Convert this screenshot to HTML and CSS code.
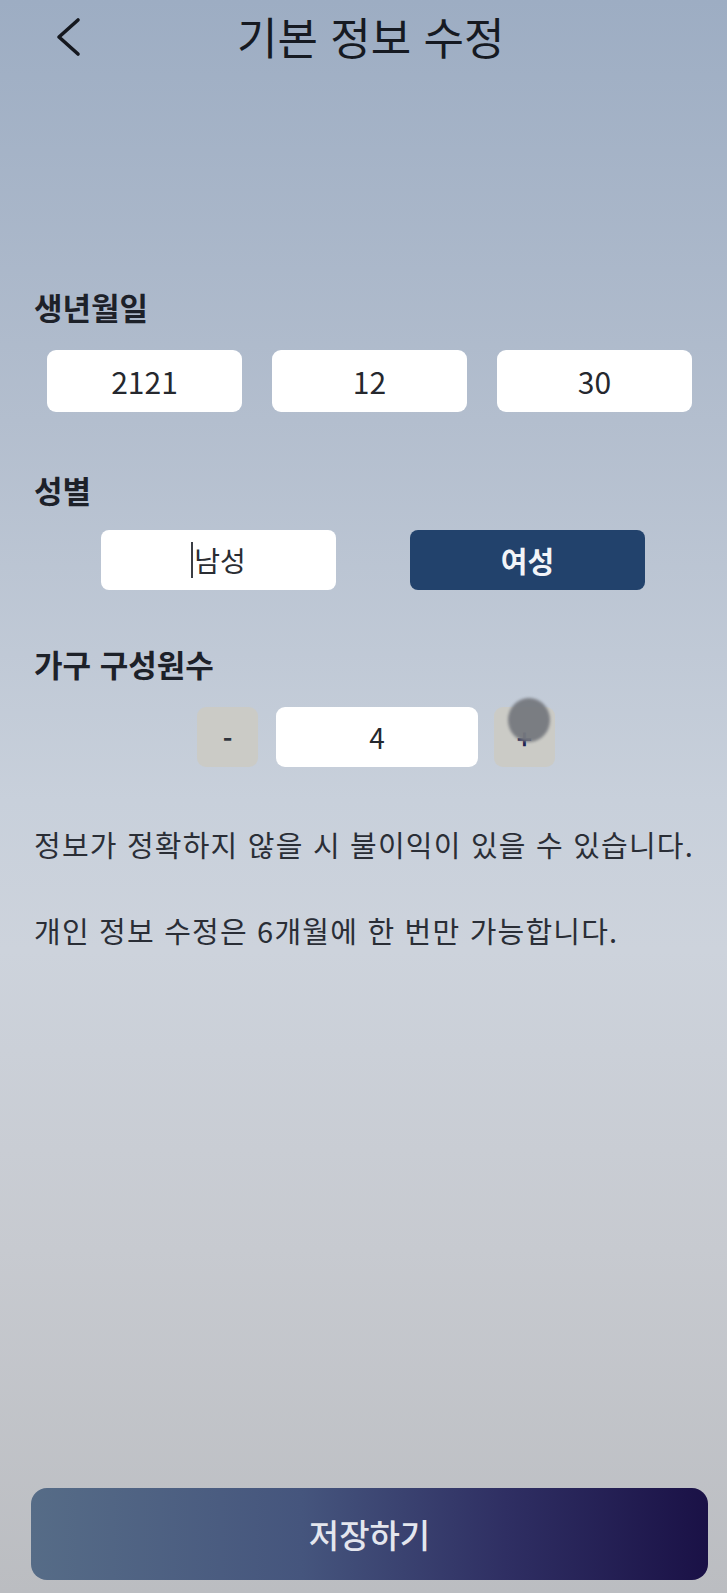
FILE: index.html
```html
<!DOCTYPE html>
<html lang="ko">
<head>
<meta charset="utf-8">
<title>기본 정보 수정</title>
<link rel="stylesheet" href="styles.css">
</head>
<body>
<div class="screen">
  <header class="header">
    <svg class="back" width="30" height="40" viewBox="0 0 30 40" aria-hidden="true">
      <polyline points="23,3 4,20 23,37" fill="none" stroke="#15181f" stroke-width="3.6" stroke-linecap="round" stroke-linejoin="round"/>
    </svg>
    <h1 class="title">기본 정보 수정</h1>
  </header>

  <main class="content">
    <div class="label first">생년월일</div>
    <div class="dates">
      <div class="field">2121</div>
      <div class="field">12</div>
      <div class="field">30</div>
    </div>

    <div class="label second">성별</div>
    <div class="gender">
      <div class="choice"><span class="caret"></span>남성</div>
      <div class="choice selected">여성</div>
    </div>

    <div class="label third">가구 구성원수</div>
    <div class="stepper">
      <div class="step minus">-</div>
      <div class="count">4</div>
      <div class="step plus">+</div>
      <div class="touch"></div>
    </div>

    <p class="info one">정보가 정확하지 않을 시 불이익이 있을 수 있습니다.</p>
    <p class="info two">개인 정보 수정은 6개월에 한 번만 가능합니다.</p>
  </main>

  <div class="save">저장하기</div>
</div>
</body>
</html>
```

FILE: styles.css
```css
* { box-sizing: border-box; }

html, body {
  margin: 0;
  padding: 0;
}

body {
  width: 727px;
  height: 1593px;
  overflow: hidden;
  font-family: "Noto Sans CJK KR", "Noto Sans", sans-serif;
  color: #1d2129;
  background: linear-gradient(180deg, #9dadc3 0px, #b3bece 420px, #c8d0db 800px, #cdd3dc 950px, #c7cad0 1250px, #bbbdc1 1593px);
}

.screen {
  height: 1593px;
  display: flex;
  flex-direction: column;
}

.header {
  height: 74px;
  display: flex;
  align-items: center;
  padding-left: 55px;
}

.back {
  display: block;
  flex: none;
}

.title {
  margin: -3px 0 0 152px;
  font-size: 44px;
  font-weight: 400;
  line-height: 74px;
  color: #161a22;
}

.content {
  padding: 0 34px;
  flex: 1;
}

.label {
  font-size: 31px;
  font-weight: 700;
  line-height: 40px;
  color: #1d2129;
}

.label.first { margin-top: 213px; }
.label.second { margin-top: 58px; }
.label.third { margin-top: 54px; }

.dates {
  margin: 23px 0 0 13px;
  display: grid;
  grid-template-columns: repeat(3, 195px);
  column-gap: 30px;
}

.field {
  height: 62px;
  background: #fff;
  border-radius: 9px;
  display: flex;
  align-items: center;
  justify-content: center;
  font-size: 30px;
  color: #25282e;
}

.gender {
  margin: 20px 0 0 67px;
  display: flex;
  gap: 74px;
}

.choice {
  width: 235px;
  height: 60px;
  border-radius: 8px;
  background: #fff;
  display: flex;
  align-items: center;
  justify-content: center;
  font-size: 28px;
  color: #2a2d33;
}

.caret {
  width: 2px;
  height: 36px;
  background: #3a3d44;
  margin-right: 1px;
}

.choice.selected {
  background: #22426c;
  color: #f2f4f8;
  font-weight: 700;
  font-size: 29px;
}

.stepper {
  position: relative;
  margin: 23px 0 0 163px;
  display: flex;
  align-items: center;
}

.step {
  width: 61px;
  height: 60px;
  border-radius: 9px;
  background: #cbcbc6;
  display: flex;
  align-items: center;
  justify-content: center;
  font-size: 26px;
  font-weight: 700;
  color: #30343c;
}

.step.plus { color: #1d2150; margin-left: 16px; }

.count {
  margin-left: 18px;
  width: 202px;
  height: 60px;
  border-radius: 9px;
  background: #fff;
  display: flex;
  align-items: center;
  justify-content: center;
  font-size: 28px;
  color: #25282e;
}

.touch {
  position: absolute;
  left: 311px;
  top: -9px;
  width: 42px;
  height: 44px;
  border-radius: 50%;
  background: #76797f;
  filter: blur(1.5px);
  opacity: 0.95;
}

.info {
  margin: 0;
  font-size: 29px;
  letter-spacing: 1.2px;
  line-height: 40px;
  font-weight: 400;
  color: #2a2e36;
  white-space: nowrap;
}

.info.one { margin-top: 57px; }
.info.two { margin-top: 46px; }

.save {
  margin: 0 0 13px 31px;
  width: 677px;
  height: 92px;
  border-radius: 16px;
  background: linear-gradient(90deg, #566c87 0%, #45557d 40%, #2f2f63 70%, #1a1146 100%);
  display: flex;
  align-items: center;
  justify-content: center;
  font-size: 33px;
  font-weight: 500;
  color: #e4e6ee;
}
```
